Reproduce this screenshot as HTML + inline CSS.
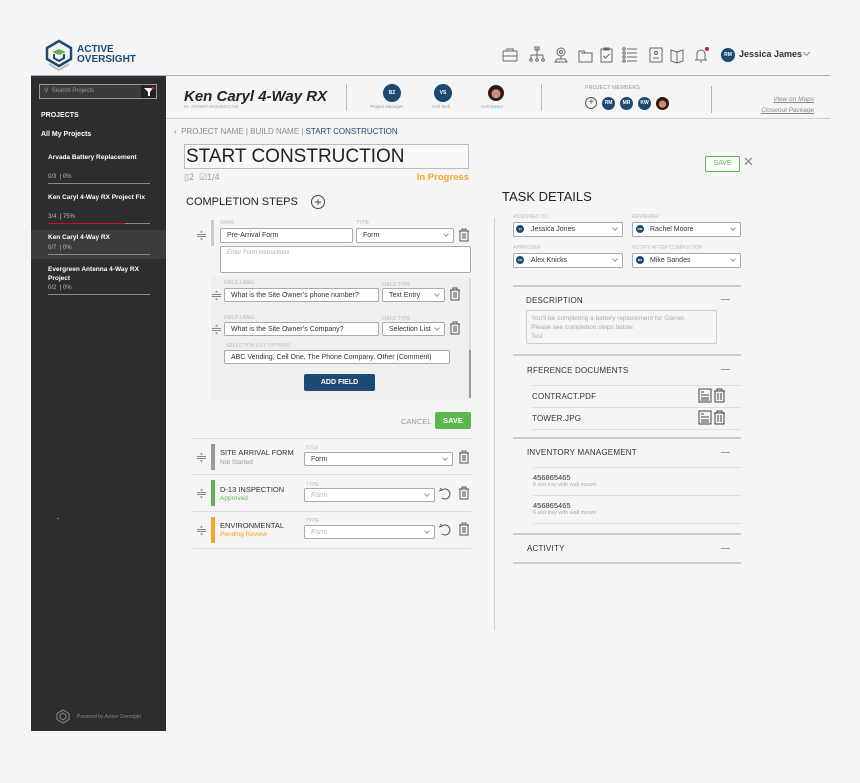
<!DOCTYPE html>
<html><head><meta charset="utf-8"><style>
*{box-sizing:border-box;margin:0;padding:0}
body{width:860px;height:783px;background:#f5f5f5;font-family:"Liberation Sans",sans-serif;position:relative;overflow:hidden;color:#333}
.a{position:absolute;white-space:nowrap}
.ln{position:absolute;background:#ddd;height:1px}
.lbl{position:absolute;font-size:5px;color:#bbb;font-style:italic;text-transform:uppercase;white-space:nowrap}
.inp{position:absolute;background:#fff;border:1px solid #aaa;border-radius:2px;font-size:7px;padding:0 6px;line-height:13px;color:#333;white-space:nowrap;overflow:hidden}
.sel:after{content:"";position:absolute;right:5px;top:3px;width:3px;height:3px;border-right:1px solid #999;border-bottom:1px solid #999;transform:rotate(45deg)}
.cir{position:absolute;border-radius:50%;background:#1c4a72;color:#fff;font-size:5px;font-weight:bold;text-align:center}
.sb{position:absolute;background:#2d2d2d;left:31px;top:76px;width:135px;height:655px}
.st{color:#fff;font-size:6.5px;font-weight:bold}
.sp{color:#bbb;font-size:6px}
.bar{position:absolute;height:1px;background:#888}
.hd{font-size:8px;color:#333;letter-spacing:.2px}
</style></head><body>
<svg width="0" height="0" style="position:absolute"><defs><g id="drag" fill="#888" stroke="#888" stroke-width="1"><path d="M0 4.5h9M0 6.5h9" fill="none"/><path d="M3 2.5l1.5-2 1.5 2zM3 8.5l1.5 2 1.5-2z" stroke="none"/></g></defs></svg>
<!-- logo -->
<svg class="a" style="left:44px;top:39px" width="30" height="32" viewBox="0 0 30 32"><path d="M15 2 L27 9 V20 L15 27 L3 20 V9Z" fill="none" stroke="#1c4a72" stroke-width="2.5"/><path d="M8 13 L15 10 L22 13 L15 16Z" fill="#5fb14f"/><path d="M10 15 V19 L15 22 L20 19 V15" fill="none" stroke="#1c4a72" stroke-width="2"/><path d="M5 25 L15 31 L25 25" fill="none" stroke="#bbb" stroke-width="2"/></svg>
<div class="a" style="left:77px;top:45px;font-size:10px;font-weight:bold;color:#1c4a72;line-height:10px">ACTIVE<br>OVERSIGHT</div>
<!-- top icons -->
<svg class="a" style="left:500px;top:46px" width="215" height="18" viewBox="0 0 215 18" fill="none" stroke="#666" stroke-width="1">
<rect x="3" y="5" width="14" height="10" rx="1"/><path d="M7 5V3h6v2M3 10h14"/>
<path d="M37 2v4M31 9h12M31 9v4M37 6v7M43 9v4"/><rect x="35" y="1" width="4" height="3"/><circle cx="31" cy="14" r="1.3"/><circle cx="37" cy="14" r="1.3"/><circle cx="43" cy="14" r="1.3"/>
<circle cx="61" cy="6" r="4"/><circle cx="61" cy="6" r="1.5"/><path d="M61 10v3M55 16h12l-2-3h-8z"/>
<path d="M79 5h5l1 2h7v9h-13z"/><path d="M81 7h9"/>
<rect x="101" y="3" width="11" height="13"/><path d="M104 2h5v2h-5zM103.5 10l2 2 4-4"/>
<circle cx="124" cy="3" r="1.2"/><circle cx="124" cy="7" r="1.2"/><circle cx="124" cy="11" r="1.2"/><circle cx="124" cy="15" r="1.2"/><path d="M127 3h10M127 7h10M127 11h10M127 15h10"/>
<rect x="150" y="2" width="12" height="14"/><circle cx="156" cy="7" r="1.5"/><path d="M153 12h6"/>
<path d="M171 4l6 2 6-2v11l-6 2-6-2zM177 6v11"/>
<path d="M195 14h12M197 14v-6a4 4 0 018 0v6M200 16h2"/>
</svg>
<div class="a" style="left:705px;top:47px;width:4px;height:4px;border-radius:50%;background:#e02020"></div>
<div class="cir" style="left:721px;top:48px;width:14px;height:14px;line-height:14px">RM</div>
<div class="a" style="left:739px;top:49px;font-size:9px;font-weight:bold;color:#333">Jessica James</div>
<div class="a" style="left:804px;top:50px;width:5px;height:5px;border-right:1px solid #888;border-bottom:1px solid #888;transform:rotate(45deg)"></div>
<div class="ln" style="left:31px;top:75px;width:799px;background:#9fb3c8"></div>
<!-- sidebar -->
<div class="sb"></div>
<div class="a" style="left:39px;top:84px;width:118px;height:15px;border:1px solid #999;background:#3a3a3a"></div>
<div class="a" style="left:44px;top:87px;font-size:6px;color:#999">⚲&nbsp;&nbsp;Search Projects</div>
<div class="a" style="left:141px;top:85px;width:15px;height:13px;background:#222"></div>
<svg class="a" style="left:143px;top:86px" width="12" height="11"><path d="M1 2h9L7 6v4H5V6z" fill="#fff"/><circle cx="10" cy="2" r="1.5" fill="#e02020"/></svg>
<div class="a st" style="left:41px;top:112px;font-size:7px">PROJECTS</div>
<div class="a st" style="left:41px;top:131px;font-size:7px">All My Projects</div>
<div class="a st" style="left:48px;top:154px">Arvada Battery Replacement</div>
<div class="a sp" style="left:48px;top:174px">0/3 &nbsp;| 0%</div>
<div class="bar" style="left:48px;top:183px;width:102px"></div>
<div class="a st" style="left:48px;top:194px">Ken Caryl 4-Way RX Project Fix</div>
<div class="a sp" style="left:48px;top:214px">3/4 &nbsp;| 75%</div>
<div class="bar" style="left:48px;top:223px;width:102px"></div>
<div class="bar" style="left:48px;top:223px;width:77px;background:#c8102e"></div>
<div class="a" style="left:31px;top:230px;width:135px;height:29px;background:#3c3c3c"></div>
<div class="a st" style="left:48px;top:234px">Ken Caryl 4-Way RX</div>
<div class="a sp" style="left:48px;top:245px">0/7 &nbsp;| 0%</div>
<div class="bar" style="left:48px;top:254px;width:102px"></div>
<div class="a st" style="left:48px;top:265px;line-height:9px">Evergreen Antenna 4-Way RX<br>Project</div>
<div class="a sp" style="left:48px;top:285px">0/2 &nbsp;| 0%</div>
<div class="bar" style="left:48px;top:294px;width:102px"></div>
<div class="a" style="left:57px;top:518px;width:2px;height:1px;background:#777"></div>
<svg class="a" style="left:56px;top:709px" width="14" height="15" fill="none" stroke="#888"><path d="M7 1l6 3.5v6L7 14 1 10.5v-6z"/><path d="M7 4l3 2v3l-3 2-3-2V6z"/></svg>
<div class="a" style="left:77px;top:714px;font-size:5px;color:#888">Powered by Active Oversight</div>
<!-- project header -->
<div class="a" style="left:184px;top:88px;font-size:15px;font-weight:bold;font-style:italic;color:#222">Ken Caryl 4-Way RX</div>
<div class="a" style="left:184px;top:104px;font-size:4.5px;color:#aaa">ID: 2009807492649872733</div>
<div class="a" style="left:346px;top:84px;width:1px;height:27px;background:#bbb"></div>
<div class="cir" style="left:383px;top:84px;width:18px;height:18px;line-height:18px">BZ</div>
<div class="a" style="left:370px;top:104px;font-size:4.5px;color:#999">Project Manager</div>
<div class="cir" style="left:434px;top:84px;width:18px;height:18px;line-height:18px">VS</div>
<div class="a" style="left:432px;top:104px;font-size:4.5px;color:#999">Cell Tech</div>
<div class="a" style="left:488px;top:85px;width:16px;height:16px;border-radius:50%;background:radial-gradient(circle at 50% 55%,#c99070 35%,#2a1a12 40%)"></div>
<div class="a" style="left:481px;top:104px;font-size:4.5px;color:#999">Cell Owner</div>
<div class="a" style="left:541px;top:84px;width:1px;height:27px;background:#bbb"></div>
<div class="a" style="left:585px;top:85px;font-size:5.5px;color:#999">PROJECT MEMBERS</div>
<div class="a" style="left:585px;top:97px;width:12px;height:12px;border-radius:50%;border:1px solid #555;font-size:10px;line-height:9px;text-align:center;color:#555">+</div>
<div class="cir" style="left:602px;top:97px;width:13px;height:13px;line-height:13px">RM</div>
<div class="cir" style="left:620px;top:97px;width:13px;height:13px;line-height:13px">MR</div>
<div class="cir" style="left:638px;top:97px;width:13px;height:13px;line-height:13px">KW</div>
<div class="a" style="left:656px;top:97px;width:13px;height:13px;border-radius:50%;background:radial-gradient(circle at 50% 55%,#c99070 35%,#2a1a12 40%)"></div>
<div class="a" style="left:711px;top:86px;width:1px;height:27px;background:#9fb3c8"></div>
<div class="a" style="right:46px;top:94px;font-size:6.5px;color:#888;font-style:italic;text-decoration:underline;text-align:right;line-height:11px">View on Maps<br>Closeout Package</div>
<div class="ln" style="left:166px;top:118px;width:664px;background:#ccc"></div>
<!-- breadcrumb -->
<div class="a" style="left:174px;top:127px;font-size:8px;color:#888">‹&nbsp; PROJECT NAME | BUILD NAME | <span style="color:#1c4a72">START CONSTRUCTION</span></div>
<div class="a" style="left:184px;top:144px;width:285px;height:25px;border:1px solid #bbb;background:#f8f8f8;font-size:19px;color:#222;padding-left:1px;line-height:24px">START CONSTRUCTION</div>
<div class="a" style="left:184px;top:172px;font-size:9px;color:#999">▯2 &nbsp;☑1/4</div>
<div class="a" style="right:391px;top:172px;font-size:9.5px;font-weight:bold;color:#f5a623">In Progress</div>
<div class="a" style="left:186px;top:196px;font-size:11px;color:#222">COMPLETION STEPS</div>
<div class="a" style="left:311px;top:195px;width:14px;height:14px;border-radius:50%;border:1px solid #444;text-align:center;font-size:12px;line-height:12px">+</div>
<!-- step 1 -->
<svg class="a" style="left:197px;top:230px" width="10" height="11"><use href="#drag"/></svg>
<div class="a" style="left:211px;top:220px;width:3px;height:26px;background:#ccc"></div>
<div class="lbl" style="left:220px;top:220px">Name</div>
<div class="inp" style="left:220px;top:228px;width:133px;height:15px">Pre-Arrival Form</div>
<div class="lbl" style="left:356px;top:220px">Type</div>
<div class="inp sel" style="left:356px;top:228px;width:98px;height:15px">Form</div>
<svg class="a" style="left:458px;top:228px" width="12" height="14" fill="none" stroke="#555"><path d="M1 3h10M4 3V1h4v2M2 3v10h8V3M5 5v6M7 5v6"/></svg>
<div class="inp" style="left:220px;top:246px;width:251px;height:27px;color:#aaa;font-style:italic;font-size:6px;line-height:12px">Enter Form Instructions</div>
<div class="a" style="left:211px;top:276px;width:260px;height:124px;background:#efefef"></div>
<div class="a" style="left:469px;top:278px;width:2px;height:120px;background:#ddd"></div>
<div class="a" style="left:469px;top:350px;width:2px;height:48px;background:#999"></div>
<div class="lbl" style="left:224px;top:280px">Field Label</div>
<svg class="a" style="left:212px;top:290px" width="10" height="11"><use href="#drag"/></svg>
<div class="inp" style="left:224px;top:288px;width:155px;height:14px">What is the Site Owner’s phone number?</div>
<div class="lbl" style="left:382px;top:282px">Field Type</div>
<div class="inp sel" style="left:382px;top:288px;width:63px;height:14px">Text Entry</div>
<svg class="a" style="left:449px;top:287px" width="12" height="14" fill="none" stroke="#555"><path d="M1 3h10M4 3V1h4v2M2 3v10h8V3M5 5v6M7 5v6"/></svg>
<div class="lbl" style="left:224px;top:315px">Field Label</div>
<svg class="a" style="left:212px;top:324px" width="10" height="11"><use href="#drag"/></svg>
<div class="inp" style="left:224px;top:322px;width:155px;height:14px">What is the Site Owner’s Company?</div>
<div class="lbl" style="left:382px;top:316px">Field Type</div>
<div class="inp sel" style="left:382px;top:322px;width:63px;height:14px">Selection List</div>
<svg class="a" style="left:449px;top:321px" width="12" height="14" fill="none" stroke="#555"><path d="M1 3h10M4 3V1h4v2M2 3v10h8V3M5 5v6M7 5v6"/></svg>
<div class="lbl" style="left:226px;top:343px">Selection List Options</div>
<div class="inp" style="left:224px;top:350px;width:226px;height:14px">ABC Vending, Cell One, The Phone Company, Other (Comment)</div>
<div class="a" style="left:304px;top:374px;width:71px;height:17px;background:#1c4a72;border-radius:2px;color:#fff;font-size:7px;font-weight:bold;text-align:center;line-height:17px">ADD FIELD</div>
<div class="a" style="left:401px;top:417px;font-size:7.5px;color:#999">CANCEL</div>
<div class="a" style="left:435px;top:412px;width:36px;height:17px;background:#5cb84e;border-radius:2px;color:#fff;font-size:7.5px;font-weight:bold;text-align:center;line-height:17px">SAVE</div>
<div class="ln" style="left:193px;top:438px;width:278px"></div>
<!-- rows -->
<svg class="a" style="left:197px;top:452px" width="10" height="11"><use href="#drag"/></svg>
<div class="a" style="left:211px;top:444px;width:4px;height:26px;background:#999"></div>
<div class="a" style="left:220px;top:448px;font-size:7.5px;color:#333">SITE ARRIVAL FORM</div>
<div class="a" style="left:220px;top:459px;font-size:6.5px;color:#999">Not Started</div>
<div class="lbl" style="left:305px;top:445px">Title</div>
<div class="inp sel" style="left:304px;top:452px;width:149px;height:14px">Form</div>
<svg class="a" style="left:458px;top:450px" width="12" height="14" fill="none" stroke="#555"><path d="M1 3h10M4 3V1h4v2M2 3v10h8V3M5 5v6M7 5v6"/></svg>
<div class="ln" style="left:193px;top:474px;width:278px"></div>
<svg class="a" style="left:197px;top:488px" width="10" height="11"><use href="#drag"/></svg>
<div class="a" style="left:211px;top:480px;width:4px;height:26px;background:#5cb84e"></div>
<div class="a" style="left:220px;top:485px;font-size:7.5px;color:#333">D-13 INSPECTION</div>
<div class="a" style="left:220px;top:495px;font-size:6.5px;color:#5cb84e">Approved</div>
<div class="lbl" style="left:306px;top:482px">Type</div>
<div class="inp sel" style="left:304px;top:488px;width:131px;height:14px;color:#bbb;font-style:italic">Form</div>
<svg class="a" style="left:438px;top:486px" width="14" height="15" fill="none" stroke="#555"><path d="M4 4a5 5 0 110 8M2 2l2 2-3 1"/></svg>
<svg class="a" style="left:458px;top:486px" width="12" height="14" fill="none" stroke="#555"><path d="M1 3h10M4 3V1h4v2M2 3v10h8V3M5 5v6M7 5v6"/></svg>
<div class="ln" style="left:193px;top:511px;width:278px"></div>
<svg class="a" style="left:197px;top:525px" width="10" height="11"><use href="#drag"/></svg>
<div class="a" style="left:211px;top:517px;width:4px;height:26px;background:#f5a623"></div>
<div class="a" style="left:220px;top:521px;font-size:7.5px;color:#333">ENVIRONMENTAL</div>
<div class="a" style="left:220px;top:531px;font-size:6.5px;color:#f5a623">Pending Review</div>
<div class="lbl" style="left:306px;top:518px">Type</div>
<div class="inp sel" style="left:304px;top:525px;width:131px;height:14px;color:#bbb;font-style:italic">Form</div>
<svg class="a" style="left:438px;top:522px" width="14" height="15" fill="none" stroke="#555"><path d="M4 4a5 5 0 110 8M2 2l2 2-3 1"/></svg>
<svg class="a" style="left:458px;top:522px" width="12" height="14" fill="none" stroke="#555"><path d="M1 3h10M4 3V1h4v2M2 3v10h8V3M5 5v6M7 5v6"/></svg>
<div class="ln" style="left:193px;top:548px;width:278px"></div>
<!-- right panel -->
<div class="a" style="left:705px;top:156px;width:35px;height:16px;border:1px solid #5cb84e;border-radius:2px;color:#5cb84e;font-size:7px;text-align:center;line-height:14px;background:#fff">SAVE</div>
<div class="a" style="left:743px;top:154px;font-size:13px;color:#888">✕</div>
<div class="a" style="left:502px;top:189px;font-size:13px;color:#222">TASK DETAILS</div>
<div class="a" style="left:494px;top:218px;width:1px;height:412px;background:#ccc"></div>
<div class="lbl" style="left:513px;top:214px">Assigned To</div>
<div class="inp sel" style="left:513px;top:222px;width:110px;height:15px;padding-left:17px">Jessica Jones</div>
<div class="cir" style="left:516px;top:225px;width:8px;height:8px;line-height:8px;font-size:3px">JJ</div>
<div class="lbl" style="left:632px;top:214px">Reviewer</div>
<div class="inp sel" style="left:632px;top:222px;width:109px;height:15px;padding-left:17px">Rachel Moore</div>
<div class="cir" style="left:636px;top:225px;width:8px;height:8px;line-height:8px;font-size:3px">RM</div>
<div class="lbl" style="left:513px;top:245px">Approver</div>
<div class="inp sel" style="left:513px;top:253px;width:110px;height:15px;padding-left:17px">Alex Knicks</div>
<div class="cir" style="left:516px;top:256px;width:8px;height:8px;line-height:8px;font-size:3px">AK</div>
<div class="lbl" style="left:632px;top:245px">Notify after completion</div>
<div class="inp sel" style="left:632px;top:253px;width:109px;height:15px;padding-left:17px">Mike Sandes</div>
<div class="cir" style="left:636px;top:256px;width:8px;height:8px;line-height:8px;font-size:3px">MS</div>
<div class="ln" style="left:513px;top:285px;width:228px;height:2px;background:#ccc"></div>
<div class="a hd" style="left:526px;top:296px">DESCRIPTION</div>
<div class="a" style="left:721px;top:299px;width:9px;height:1px;background:#999"></div>
<div class="a" style="left:526px;top:310px;width:191px;height:34px;border:1px solid #ccc;border-radius:2px;font-size:6.5px;color:#aaa;padding:3px 4px;line-height:9px;white-space:nowrap">You'll be completing a battery replacement for Garner.<br>Please see completion steps below.<br>Test</div>
<div class="ln" style="left:513px;top:354px;width:228px;height:2px;background:#ccc"></div>
<div class="a hd" style="left:527px;top:366px">RFERENCE DOCUMENTS</div>
<div class="a" style="left:721px;top:369px;width:9px;height:1px;background:#999"></div>
<div class="ln" style="left:532px;top:385px;width:209px"></div>
<div class="a hd" style="left:532px;top:392px">CONTRACT.PDF</div>
<div class="ln" style="left:532px;top:407px;width:209px"></div>
<div class="a hd" style="left:532px;top:414px">TOWER.JPG</div>
<div class="ln" style="left:532px;top:429px;width:209px"></div>
<svg class="a" style="left:698px;top:388px" width="30" height="40" fill="none" stroke="#444"><rect x="1" y="1" width="12" height="13"/><path d="M3 4h3M3 7h8M3 10h8M3 12h8"/><path d="M16 3h11M19 3V1h5v2M17 3v11h9V3M20 5v7M23 5v7"/><rect x="1" y="23" width="12" height="13"/><path d="M3 26h3M3 29h8M3 32h8M3 34h8"/><path d="M16 25h11M19 25v-2h5v2M17 25v11h9V25M20 27v7M23 27v7"/></svg>
<div class="ln" style="left:513px;top:437px;width:228px;height:2px;background:#ccc"></div>
<div class="a hd" style="left:527px;top:448px">INVENTORY MANAGEMENT</div>
<div class="a" style="left:721px;top:452px;width:9px;height:1px;background:#999"></div>
<div class="ln" style="left:533px;top:467px;width:208px"></div>
<div class="a" style="left:533px;top:473px;font-size:7.5px;color:#333">456865465</div>
<div class="a" style="left:533px;top:482px;font-size:5.5px;color:#aaa">6 slot tray with wall mount</div>
<div class="ln" style="left:533px;top:495px;width:208px"></div>
<div class="a" style="left:533px;top:501px;font-size:7.5px;color:#333">456865465</div>
<div class="a" style="left:533px;top:510px;font-size:5.5px;color:#aaa">6 slot tray with wall mount</div>
<div class="ln" style="left:533px;top:523px;width:208px"></div>
<div class="ln" style="left:513px;top:533px;width:228px;height:2px;background:#ccc"></div>
<div class="a hd" style="left:527px;top:544px">ACTIVITY</div>
<div class="a" style="left:721px;top:548px;width:9px;height:1px;background:#999"></div>
<div class="ln" style="left:513px;top:562px;width:228px;height:2px;background:#ccc"></div>
</body></html>
